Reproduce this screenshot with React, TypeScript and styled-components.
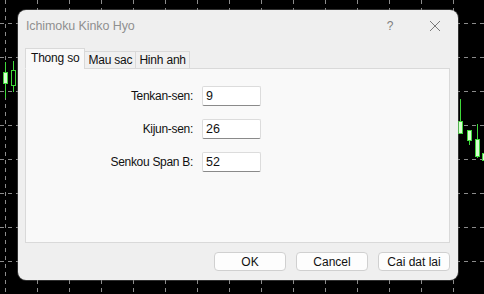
import styled, { createGlobalStyle } from "styled-components";

const GlobalStyle = createGlobalStyle`
  html, body {
    margin: 0;
    padding: 0;
    background: #000;
  }
  body {
    font-family: "Liberation Sans", Arial, sans-serif;
  }
`;

type Candle = {
  x: number;
  wickTop: number;
  wickBottom: number;
  bodyTop: number;
  bodyBottom: number;
  filled: boolean;
};

const candles: Candle[] = [
  { x: 3, wickTop: 62, wickBottom: 98, bodyTop: 72, bodyBottom: 83, filled: true },
  { x: 11, wickTop: 61, wickBottom: 92, bodyTop: 70, bodyBottom: 85, filled: false },
  { x: 458, wickTop: 99, wickBottom: 133, bodyTop: 121, bodyBottom: 133, filled: true },
  { x: 467, wickTop: 130, wickBottom: 145, bodyTop: 130, bodyBottom: 140, filled: true },
  { x: 475, wickTop: 124, wickBottom: 158, bodyTop: 139, bodyBottom: 156, filled: true },
  { x: 482, wickTop: 148, wickBottom: 162, bodyTop: 153, bodyBottom: 160, filled: true },
];

const params = [
  { label: "Tenkan-sen:", value: "9" },
  { label: "Kijun-sen:", value: "26" },
  { label: "Senkou Span B:", value: "52" },
];

const Chart = () => {
  const vLines = Array.from({ length: 16 }, (_, i) => 5 + i * 32);
  const hLines = Array.from({ length: 9 }, (_, i) => 23 + i * 34);
  return (
    <ChartSvg width="484" height="294">
      {vLines.map((x) => (
        <line key={"v" + x} x1={x + 0.5} y1={0} x2={x + 0.5} y2={294} stroke="#8c8c8c" strokeDasharray="4 4" />
      ))}
      {hLines.map((y) => (
        <line key={"h" + y} x1={0} y1={y + 0.5} x2={484} y2={y + 0.5} stroke="#8c8c8c" strokeDasharray="4 4" />
      ))}
      {candles.map((c, i) => (
        <g key={i}>
          <line x1={c.x + 2.5} y1={c.wickTop} x2={c.x + 2.5} y2={c.wickBottom} stroke="#3fd83a" strokeWidth="1" />
          <rect
            x={c.x + 0.5}
            y={c.bodyTop + 0.5}
            width={4}
            height={c.bodyBottom - c.bodyTop}
            fill={c.filled ? "#d8ffd0" : "#000"}
            stroke="#3fd83a"
            strokeWidth="1.2"
          />
        </g>
      ))}
    </ChartSvg>
  );
};

export default function App() {
  return (
    <>
      <GlobalStyle />
      <Screen>
        <Chart />
        <Dialog>
          <TitleBar>
            <Title>Ichimoku Kinko Hyo</Title>
            <HelpButton>?</HelpButton>
            <CloseButton>
              <svg width="12" height="12" viewBox="0 0 12 12">
                <path d="M1 1 L11 11 M11 1 L1 11" stroke="#7a7a7a" strokeWidth="1" fill="none" />
              </svg>
            </CloseButton>
          </TitleBar>
          <Tabs>
            <Tab $active>Thong so</Tab>
            <Tab>Mau sac</Tab>
            <Tab>Hinh anh</Tab>
          </Tabs>
          <Panel>
            <Form>
              {params.map((p) => (
                <FieldRow key={p.label}>
                  <Label>{p.label}</Label>
                  <Input defaultValue={p.value} />
                </FieldRow>
              ))}
            </Form>
          </Panel>
          <Footer>
            <Button>OK</Button>
            <Button>Cancel</Button>
            <Button>Cai dat lai</Button>
          </Footer>
        </Dialog>
      </Screen>
    </>
  );
}

const Screen = styled.div`
  position: relative;
  width: 484px;
  height: 294px;
  overflow: hidden;
  background: #000;
`;

const ChartSvg = styled.svg`
  position: absolute;
  left: 0;
  top: 0;
  shape-rendering: crispEdges;
`;

const Dialog = styled.div`
  position: absolute;
  left: 18px;
  top: 10px;
  width: 440px;
  height: 270px;
  box-sizing: border-box;
  background: #efefef;
  border-radius: 8px;
  box-shadow: 0 0 0 1px rgba(120, 120, 120, 0.4);
  display: flex;
  flex-direction: column;
  padding: 0 8px 9px 7px;
  font-size: 12px;
  color: #111;
`;

const TitleBar = styled.div`
  height: 29px;
  display: flex;
  align-items: center;
  padding-top: 1px;
  padding-left: 1px;
`;

const Title = styled.div`
  flex: 1;
  color: #909090;
  font-size: 12.5px;
  letter-spacing: -0.1px;
`;

const HelpButton = styled.div`
  width: 20px;
  margin-right: 25px;
  text-align: center;
  color: #7e7e7e;
  font-size: 12px;
`;

const CloseButton = styled.div`
  width: 20px;
  display: flex;
  justify-content: center;
  margin-right: 5px;
`;

const Tabs = styled.div`
  height: 29px;
  display: flex;
  align-items: flex-end;
  position: relative;
  z-index: 1;
  margin-bottom: -1px;
`;

const Tab = styled.div<{ $active?: boolean }>`
  box-sizing: border-box;
  height: ${(p) => (p.$active ? "21px" : "18px")};
  padding: 0 ${(p) => (p.$active ? "5px" : "3px")};
  display: flex;
  align-items: center;
  padding-bottom: ${(p) => (p.$active ? "2px" : "0")};
  border: 1px solid #d9d9d9;
  border-bottom: ${(p) => (p.$active ? "1px solid #f9f9f9" : "1px solid #d9d9d9")};
  margin-left: ${(p) => (p.$active ? "0" : "-1px")};
  background: ${(p) => (p.$active ? "#f9f9f9" : "#f0f0f0")};
  color: #111;
  font-size: 12px;
  letter-spacing: -0.2px;
`;

const Panel = styled.div`
  height: 175px;
  box-sizing: border-box;
  background: #f9f9f9;
  border: 1px solid #d9d9d9;
  padding-top: 17px;
`;

const Form = styled.div`
  display: flex;
  flex-direction: column;
  gap: 13px;
`;

const FieldRow = styled.div`
  display: grid;
  grid-template-columns: 167px 59px;
  column-gap: 9px;
  align-items: center;
`;

const Label = styled.span`
  text-align: right;
  font-size: 12px;
  letter-spacing: -0.3px;
  color: #111;
`;

const Input = styled.input`
  box-sizing: border-box;
  width: 59px;
  height: 20px;
  border: 1px solid #dcdcdc;
  border-bottom: 1px solid #8a8a8a;
  border-radius: 2px;
  background: #fff;
  padding: 0 3px;
  font-family: "Liberation Sans", Arial, sans-serif;
  font-size: 12.5px;
  color: #111;
  outline: none;
`;

const Footer = styled.div`
  margin-top: auto;
  display: flex;
  justify-content: flex-end;
  gap: 10px;
`;

const Button = styled.button`
  box-sizing: border-box;
  width: 72px;
  height: 19px;
  background: #fdfdfd;
  border: 1px solid #d0d0d0;
  border-radius: 4px;
  font-family: "Liberation Sans", Arial, sans-serif;
  font-size: 12px;
  color: #111;
  padding: 0;
`;
